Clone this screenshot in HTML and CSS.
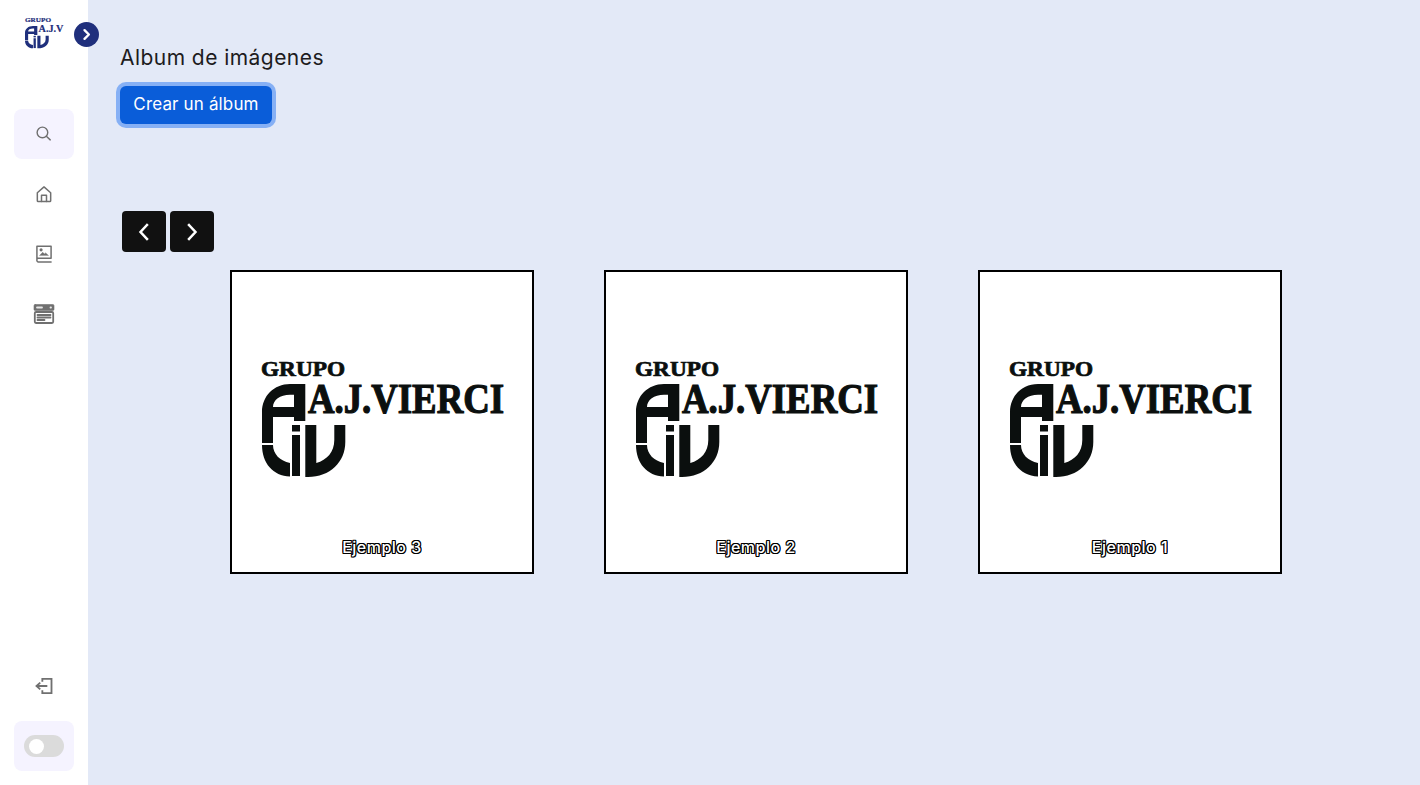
FILE: index.html
```html
<!DOCTYPE html>
<html lang="es">
<head>
<meta charset="utf-8">
<title>Album de imágenes</title>
<link rel="stylesheet" href="styles.css">
</head>
<body>
<svg class="defs" width="0" height="0" aria-hidden="true">
  <defs>
    <g id="mark">
      <path fill-rule="evenodd" d="M0 59V28C0 12 12 0 28 0H43.300V37H32V33H11V59ZM11 23H32V10.700H28C18 10.700 11 16 11 23Z"/>
      <path d="M0 61H11C11 70 18 77 28 79V92.500C11 92 0 79 0 61Z"/>
      <rect x="30" y="41" width="8" height="6.500"/>
      <rect x="30" y="51" width="8" height="41"/>
      <path d="M43.300 41H54.300V79C65 76 72.300 68 72.300 56V41H83.300V58C83.300 78 68 93 46 93H43.300Z"/>
    </g>
  </defs>
</svg>
<div class="app">
  <aside class="sidebar">
    <div class="brand">
      <svg class="brand-logo" viewBox="0 0 44 34" aria-label="Grupo A.J.V">
        <text class="brand-grupo" x="1" y="5" textLength="26" lengthAdjust="spacingAndGlyphs">GRUPO</text>
        <use href="#mark" transform="translate(1 9) scale(.285 .24)"/>
        <text class="brand-ajv" x="14.500" y="15" textLength="25" lengthAdjust="spacingAndGlyphs">A.J.V</text>
      </svg>
      <span class="collapse">
        <svg viewBox="0 0 24 24" class="collapse-icon"><path d="M9.500 6.500 15 12l-5.500 5.500"/></svg>
      </span>
    </div>
    <nav class="nav">
      <a class="nav-item nav-item-active">
        <svg class="icon icon-search" viewBox="0 0 24 24"><circle cx="10.500" cy="10.500" r="7.500"/><path d="m16 16 5.500 5"/></svg>
      </a>
      <a class="nav-item">
        <svg class="icon" viewBox="0 0 24 24"><path d="M4 10.500 12 3.500l8 7V20a1 1 0 0 1-1 1H5a1 1 0 0 1-1-1Z"/><path d="M9 21v-7.500h6V21"/></svg>
      </a>
      <a class="nav-item">
        <svg class="icon" viewBox="0 0 24 24"><path d="M3.500 18V2.800h17V17H5a1.800 1.800 0 0 0-1.500 1Zm0 0V19a2 2 0 0 0 1.500 2.500h15.500"/><circle cx="8.500" cy="7" r="1" class="fill"/><path d="m7 13.500 3.500-3.500 2 2 1.500-1.300 3 2.800Z" class="fill thin"/></svg>
      </a>
      <a class="nav-item">
        <svg class="icon icon-wide" viewBox="0 0 24 24"><rect x="2" y="2.500" width="20" height="6" rx="1.200" class="fill thin"/><rect x="2.800" y="10" width="18.400" height="11" rx="1.200"/><path d="M5.500 13h13M5.500 15.500h13M5.500 18h7"/><path class="cut" d="M5 5.500h5M18.500 5.500h.5"/></svg>
      </a>
    </nav>
    <div class="sidebar-foot">
      <a class="nav-item nav-item-plain">
        <svg class="icon icon-logout" viewBox="0 0 24 24"><path d="M10 7V3.500h11v17H10V17"/><path d="M16 12H3M7.500 8 3 12l4.500 4"/></svg>
      </a>
      <div class="theme-box"><span class="toggle"><span class="knob"></span></span></div>
    </div>
  </aside>
  <main class="content">
    <h1 class="title">Album de imágenes</h1>
    <button class="create">Crear un álbum</button>
    <div class="pager">
      <button class="page-btn"><svg viewBox="0 0 24 24"><path d="M15 5 8.500 12l6.500 7"/></svg></button>
      <button class="page-btn"><svg viewBox="0 0 24 24"><path d="m9 5 6.500 7L9 19"/></svg></button>
    </div>
    <div class="albums">
      <article class="album">
        <svg class="logo" viewBox="0 0 250 120" aria-label="Grupo A.J.Vierci">
          <text class="logo-grupo" x="2" y="17" textLength="84" lengthAdjust="spacingAndGlyphs">GRUPO</text>
          <use href="#mark" transform="translate(3 25)"/>
          <text class="logo-name" x="49" y="54" textLength="196" lengthAdjust="spacingAndGlyphs">A.J.VIERCI</text>
        </svg>
        <span class="album-name">Ejemplo 3</span>
      </article>
      <article class="album">
        <svg class="logo" viewBox="0 0 250 120" aria-label="Grupo A.J.Vierci">
          <text class="logo-grupo" x="2" y="17" textLength="84" lengthAdjust="spacingAndGlyphs">GRUPO</text>
          <use href="#mark" transform="translate(3 25)"/>
          <text class="logo-name" x="49" y="54" textLength="196" lengthAdjust="spacingAndGlyphs">A.J.VIERCI</text>
        </svg>
        <span class="album-name">Ejemplo 2</span>
      </article>
      <article class="album">
        <svg class="logo" viewBox="0 0 250 120" aria-label="Grupo A.J.Vierci">
          <text class="logo-grupo" x="2" y="17" textLength="84" lengthAdjust="spacingAndGlyphs">GRUPO</text>
          <use href="#mark" transform="translate(3 25)"/>
          <text class="logo-name" x="49" y="54" textLength="196" lengthAdjust="spacingAndGlyphs">A.J.VIERCI</text>
        </svg>
        <span class="album-name">Ejemplo 1</span>
      </article>
    </div>
  </main>
</div>
</body>
</html>
```
FILE: styles.css
```css
* { box-sizing: border-box; }
html, body { margin: 0; height: 100%; }
body { font-family: "Inter", "Noto Sans", sans-serif; background: #e3e9f7; color: #1d1b20; overflow: hidden; }
.defs { display: block; height: 0; }
.app { display: flex; height: 785px; }

.sidebar { position: relative; width: 88px; flex: none; background: #fff; display: flex; flex-direction: column; padding: 0 14px 14px; }
.brand { height: 109px; position: relative; }
.brand-logo { position: absolute; left: 10px; top: 17px; width: 44px; height: 34px; fill: #1f2f7c; overflow: visible; }
.brand-grupo { font: 700 6px "Liberation Serif", serif; stroke: #1f2f7c; stroke-width: .2px; }
.brand-ajv { font: 700 10.500px "Liberation Serif", serif; stroke: #1f2f7c; stroke-width: .2px; }
.collapse { position: absolute; left: 60px; top: 22px; width: 25px; height: 25px; border-radius: 50%; background: #1f2f7c; display: flex; align-items: center; justify-content: center; }
.collapse-icon { width: 19px; height: 19px; fill: none; stroke: #fff; stroke-width: 3; stroke-linecap: round; stroke-linejoin: round; }

.nav { display: flex; flex-direction: column; gap: 10px; }
.nav-item { width: 60px; height: 50px; border-radius: 8px; display: flex; align-items: center; justify-content: center; }
.nav-item-active { background: #f5f3ff; }
.icon { width: 20px; height: 20px; fill: none; stroke: #707070; stroke-width: 1.800; stroke-linecap: round; stroke-linejoin: round; }
.icon-search { width: 17px; height: 17px; margin: -1px 2px 0 0; stroke-width: 2; }
.icon-wide { width: 24px; height: 24px; }
.icon-logout { stroke-width: 2.200; stroke-linecap: butt; stroke-linejoin: miter; }
.icon .fill { fill: #707070; stroke: #707070; }
.icon .thin { stroke-width: .6; }
.icon .cut { stroke: #e8e8e8; }

.sidebar-foot { margin-top: auto; display: flex; flex-direction: column; gap: 10px; }
.theme-box { width: 60px; height: 50px; border-radius: 8px; background: #f5f3ff; display: flex; align-items: center; justify-content: center; }
.toggle { width: 40px; height: 22px; border-radius: 11px; background: #dbdbdb; padding: 3.500px 5px; display: flex; }
.knob { width: 15px; height: 15px; border-radius: 50%; background: #fff; }

.content { flex: 1; padding: 46px 32px 0; }
.title { margin: 0; font-size: 21px; line-height: 24px; font-weight: 400; letter-spacing: .45px; }
.create { display: block; margin-top: 16px; width: 152px; height: 38px; border: 0; border-radius: 6px; padding: 0 0 2px; background: #0a5dd9; color: #fff; font: 400 17px "Inter", sans-serif; letter-spacing: .15px; box-shadow: 0 0 0 4px #86b0f5; }
.pager { display: flex; gap: 4px; margin: 87px 0 0 2px; }
.page-btn { width: 44px; height: 41px; border: 0; border-radius: 4px; background: #111; padding: 0; display: flex; align-items: center; justify-content: center; }
.page-btn svg { width: 24px; height: 24px; fill: none; stroke: #fff; stroke-width: 2.500; stroke-linecap: square; stroke-linejoin: miter; }

.albums { display: flex; gap: 70px; margin: 18px 0 0 110px; }
.album { width: 304px; height: 304px; background: #fff; border: 2px solid #000; position: relative; display: flex; flex-direction: column; align-items: flex-start; }
.logo { display: block; width: 250px; height: 120px; margin: 87px 0 0 27px; fill: #0b0f0e; overflow: visible; }
.logo-grupo { font: 700 20px "Liberation Serif", serif; stroke: #0b0f0e; stroke-width: .7px; }
.logo-name { font: 700 42px "Liberation Serif", serif; stroke: #0b0f0e; stroke-width: 1.200px; }
.album-name { position: absolute; left: 0; right: 0; top: 264px; text-align: center; font-size: 16px; line-height: 22px; font-weight: 500; letter-spacing: .5px; color: #fff; text-shadow: 1px 0 0 #000, -1px 0 0 #000, 0 1px 0 #000, 0 -1px 0 #000, 1px 1px 0 #000, -1px -1px 0 #000, 1px -1px 0 #000, -1px 1px 0 #000; }
```
